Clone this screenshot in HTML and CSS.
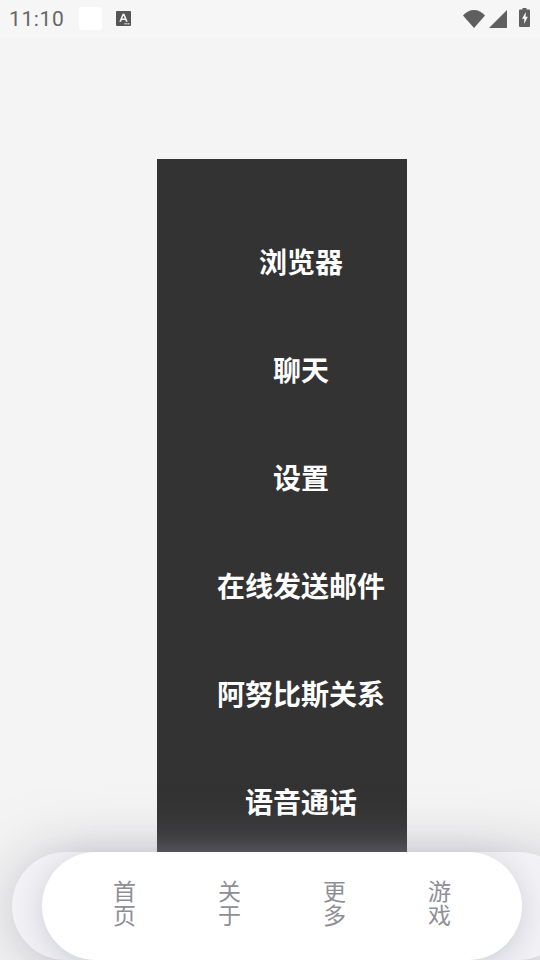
FILE: index.html
```html
<!DOCTYPE html>
<html lang="zh-CN">
<head>
<meta charset="utf-8">
<title>菜单</title>
<link rel="stylesheet" href="styles.css">
</head>
<body>
<div class="app">
  <header class="status">
    <span class="time">11:10</span>
    <span class="white-tile"></span>
    <svg class="a-icon" viewBox="0 0 16 16"><rect width="16" height="16" rx="1" fill="#555555"/><path d="M3.500 11.500 7 3h2l3.500 8.500h-1.900l-.7-1.900H6.100l-.7 1.900zM6.700 8.100h2.600L8 4.900z" fill="#f6f6f6"/><rect x="9" y="13" width="1.300" height="1.300" fill="#f6f6f6"/><rect x="11" y="13" width="1.300" height="1.300" fill="#f6f6f6"/><rect x="13" y="13" width="1.300" height="1.300" fill="#f6f6f6"/></svg>
    <span class="spacer"></span>
    <svg class="wifi" viewBox="0 0 22 18"><path d="M0 5.500C3 2 7 0 11 0s8 2 11 5.500L11 18z" fill="#5f5f5f"/></svg>
    <svg class="signal" viewBox="0 0 18 18"><path d="M18 0v18H0z" fill="#5f5f5f"/></svg>
    <svg class="battery" viewBox="0 0 11 19"><path d="M3.500 0h4v1.500H10a1 1 0 0 1 1 1V18a1 1 0 0 1-1 1H1a1 1 0 0 1-1-1V2.500a1 1 0 0 1 1-1h2.500z" fill="#5f5f5f"/><path d="M6.800 4 3 10.800h2.200V16L8.800 8.800H6.600z" fill="#f6f6f6"/></svg>
  </header>
  <main class="stage">
    <nav class="menu">
      <div class="menu-item">浏览器</div>
      <div class="menu-item">聊天</div>
      <div class="menu-item">设置</div>
      <div class="menu-item">在线发送邮件</div>
      <div class="menu-item">阿努比斯关系</div>
      <div class="menu-item">语音通话</div>
    </nav>
  </main>
  <footer class="tabbar">
    <div class="tabbar-back"></div>
    <div class="tabbar-front">
      <div class="tab">首页</div>
      <div class="tab">关于</div>
      <div class="tab">更多</div>
      <div class="tab">游戏</div>
    </div>
  </footer>
</div>
</body>
</html>
```
FILE: styles.css
```css
* { box-sizing: border-box; }
html, body { margin: 0; padding: 0; }
body {
  width: 540px;
  height: 960px;
  overflow: hidden;
  background: #f4f4f4;
  font-family: "Noto Sans CJK SC", "Noto Sans", sans-serif;
}
.app {
  width: 540px;
  height: 960px;
  display: flex;
  flex-direction: column;
  overflow: hidden;
}
.status {
  flex: 0 0 38px;
  display: flex;
  align-items: center;
  background: #f6f6f6;
  padding: 0 10px 1px 10px;
}
.time {
  font-family: Roboto, sans-serif;
  font-size: 21px;
  letter-spacing: 0.6px;
  color: #666666;
  width: 69px;
  margin-left: -1px;
  margin-right: 1px;
}
.white-tile {
  width: 23px;
  height: 23px;
  border-radius: 3px;
  background: #ffffff;
}
.a-icon { width: 15px; height: 15px; margin-left: 14px; }
.spacer { flex: 1; }
.wifi { width: 22px; height: 18px; }
.signal { width: 18px; height: 18px; margin-left: 4px; }
.battery { width: 11px; height: 19px; margin-left: 12px; margin-top: -2px; }
.stage {
  flex: 1;
  padding: 121px 0 0 157px;
  min-height: 0;
}
.menu {
  width: 250px;
  height: 100%;
  background: #333333;
  padding-top: 47.5px;
}
.menu-item {
  height: 108px;
  padding-left: 38px;
  display: flex;
  align-items: center;
  justify-content: center;
  color: #ffffff;
  font-size: 28px;
  font-weight: 700;
  line-height: 1;
}
.tabbar {
  flex: 0 0 108px;
  position: relative;
  z-index: 2;
}
.tabbar-back {
  position: absolute;
  left: 12px;
  top: 0;
  width: 560px;
  height: 108px;
  border-radius: 54px;
  background: #f3f3f6;
  box-shadow: 0 4px 60px rgba(145, 145, 160, 0.5);
}
.tabbar-front {
  position: absolute;
  left: 42px;
  top: 0;
  width: 480px;
  height: 108px;
  border-radius: 54px;
  background: #ffffff;
  box-shadow: 0 6px 30px rgba(150, 150, 175, 0.42);
  display: flex;
  padding: 0 30px;
}
.tab {
  flex: 1;
  display: flex;
  align-items: center;
  justify-content: center;
  width: 105px;
  padding: 0 30px 8px;
  text-align: center;
  color: #8e8e96;
  font-size: 23px;
  line-height: 24.500px;
}
```
